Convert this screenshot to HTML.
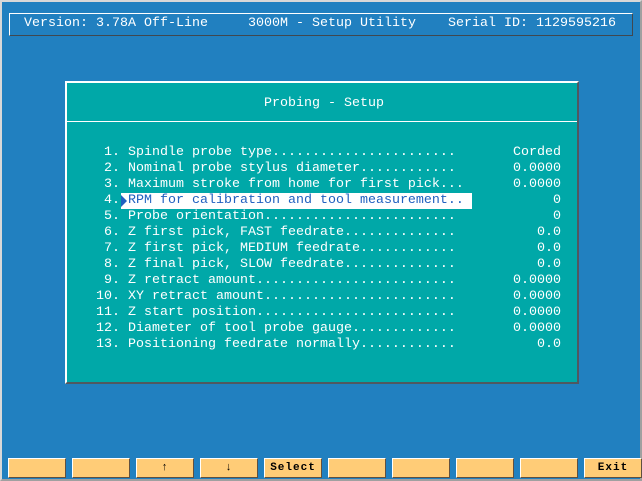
<html><head><style>
body{margin:0;width:642px;height:481px;background:#2180c0;position:relative;overflow:hidden;font-family:"Liberation Mono",monospace;font-size:13.33px;}
.frame{position:absolute;left:0;top:0;width:638px;height:477px;border:2px solid #d8d8d8;border-right-color:#a0a0a0;border-bottom-color:#a0a0a0;}
.hdr{position:absolute;left:9px;top:13px;width:622px;height:21px;border-top:1px solid #fff;border-left:1px solid #fff;border-bottom:1px solid #404850;border-right:1px solid #404850;}
.t{position:absolute;color:#fff;white-space:pre;line-height:16px;}
.panel{position:absolute;left:65px;top:81px;width:510px;height:299px;background:#00a8a8;border-top:2px solid #fff;border-left:2px solid #fff;border-bottom:2px solid #505860;border-right:2px solid #505860;}
.sep{position:absolute;left:67px;top:121px;width:510px;height:1px;background:#fff;}
.hl{position:absolute;left:121px;top:193px;width:351px;height:16px;background:#fff;}
.btn{position:absolute;top:458px;width:56px;height:18px;background:#ffcc77;border-top:1px solid #fff;border-left:1px solid #fff;border-bottom:1px solid #605040;border-right:1px solid #605040;color:#000;font-weight:bold;font-size:11px;text-align:center;line-height:18px;letter-spacing:1px;}
.v{position:absolute;color:#fff;width:100px;text-align:right;left:461px;line-height:16px;}
</style></head><body>
<div class="frame"></div>
<div class="hdr"></div>
<div class="t" style="left:24px;top:16px">Version: 3.78A Off-Line</div>
<div class="t" style="left:248px;top:16px">3000M - Setup Utility</div>
<div class="t" style="left:448px;top:16px">Serial ID: 1129595216</div>
<div class="panel"></div>
<div class="sep"></div>
<div class="t" style="left:264px;top:96px">Probing - Setup</div>
<div class="hl"></div>
<svg style="position:absolute;left:121px;top:195px" width="7" height="12"><path d="M0 0L6 6L0 12Z" fill="#2060c0"/></svg>
<div class="t" style="left:96px;top:145px"> 1. Spindle probe type.......................
 2. Nominal probe stylus diameter............
 3. Maximum stroke from home for first pick...
 4. <span style="color:#2060c0">RPM for calibration and tool measurement..</span>
 5. Probe orientation........................
 6. Z first pick, FAST feedrate..............
 7. Z first pick, MEDIUM feedrate............
 8. Z final pick, SLOW feedrate..............
 9. Z retract amount.........................
10. XY retract amount........................
11. Z start position.........................
12. Diameter of tool probe gauge.............
13. Positioning feedrate normally............</div>
<div class="v" style="top:145px">Corded</div>
<div class="v" style="top:161px">0.0000</div>
<div class="v" style="top:177px">0.0000</div>
<div class="v" style="top:193px">0</div>
<div class="v" style="top:209px">0</div>
<div class="v" style="top:225px">0.0</div>
<div class="v" style="top:241px">0.0</div>
<div class="v" style="top:257px">0.0</div>
<div class="v" style="top:273px">0.0000</div>
<div class="v" style="top:289px">0.0000</div>
<div class="v" style="top:305px">0.0000</div>
<div class="v" style="top:321px">0.0000</div>
<div class="v" style="top:337px">0.0</div>
<div class="btn" style="left:8px"></div>
<div class="btn" style="left:72px"></div>
<div class="btn" style="left:136px">↑</div>
<div class="btn" style="left:200px">↓</div>
<div class="btn" style="left:264px">Select</div>
<div class="btn" style="left:328px"></div>
<div class="btn" style="left:392px"></div>
<div class="btn" style="left:456px"></div>
<div class="btn" style="left:520px"></div>
<div class="btn" style="left:584px">Exit</div>
</body></html>
